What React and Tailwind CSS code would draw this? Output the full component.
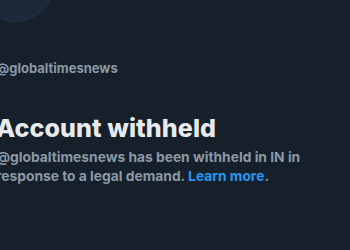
export default function App() {
  return (
    <div
      className="relative w-[350px] h-[250px] overflow-hidden bg-[#15202b]"
      style={{ fontFamily: "Inter, 'Liberation Sans', sans-serif" }}
    >
      <div className="absolute -left-[25px] -top-[58px] w-[80px] h-[80px] rounded-full bg-[#1c2938] border border-[#233040]" />
      <div className="-ml-[4px] pt-[58px] flex flex-col">
        <div className="text-[13px] leading-[20px] font-bold text-[#8b98a5]">
          @globaltimesnews
        </div>
        <h1 className="mt-[36px] text-[25px] leading-[28px] font-extrabold text-[#e7e9ea] tracking-[0.1px]">
          Account withheld
        </h1>
        <p className="mt-[6px] w-[314px] text-[13.8px] leading-[19px] font-bold text-[#8b98a5]">
          @globaltimesnews has been withheld in IN in response to a legal demand.{" "}
          <span className="text-[#1d9bf0]">Learn more</span>.
        </p>
      </div>
    </div>
  );
}
